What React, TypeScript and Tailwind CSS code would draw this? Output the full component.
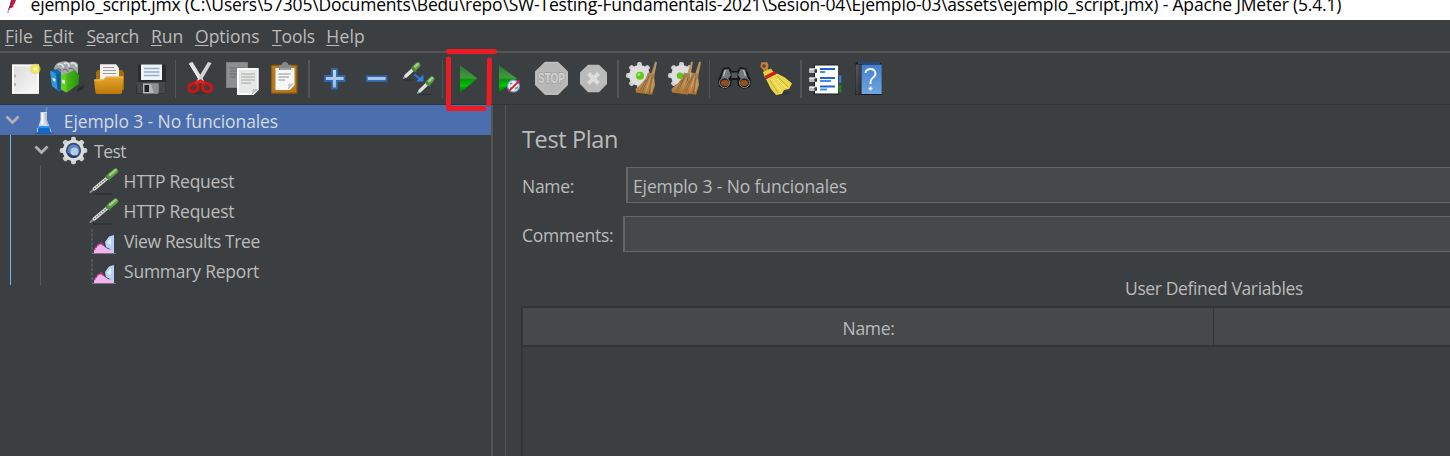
import type { ReactNode } from "react";

const TITLE =
  "ejemplo_script.jmx (C:\\Users\\57305\\Documents\\Bedu\\repo\\SW-Testing-Fundamentals-2021\\Sesion-04\\Ejemplo-03\\assets\\ejemplo_script.jmx) - Apache JMeter (5.4.1)";

const MENUS = [
  { label: "File", cls: "w-[38px]" },
  { label: "Edit", cls: "w-[43.5px]" },
  { label: "Search", cls: "w-[64.5px] tracking-[-0.55px]" },
  { label: "Run", cls: "w-[44px]" },
  { label: "Options", cls: "w-[77px]" },
  { label: "Tools", cls: "w-[54.3px] tracking-[-0.1px]" },
  { label: "Help", cls: "w-[50px] tracking-[0.2px]" },
];

/* One 42px toolbar cell; drawing coordinates start one pixel below the toolbar's top border. */
function Tool({ children }: { children: ReactNode }) {
  return (
    <svg width="42" height="51" viewBox="0 1 42 51" className="block shrink-0 overflow-visible">
      {children}
    </svg>
  );
}

function Separator({ cls }: { cls: string }) {
  return <div className={`h-[38px] shrink-0 bg-[#555555] ${cls}`} />;
}

function Defs() {
  return (
    <svg width="0" height="0" className="absolute">
      <defs>
        <linearGradient id="paper" x1="0" y1="0" x2="1" y2="1">
          <stop offset="0" stopColor="#dcdcdc" />
          <stop offset="1" stopColor="#f8f8f8" />
        </linearGradient>
        <linearGradient id="green" x1="0" y1="0" x2="0" y2="1">
          <stop offset="0" stopColor="#2c7a2c" />
          <stop offset=".46" stopColor="#3f9a3f" />
          <stop offset=".54" stopColor="#049604" />
          <stop offset=".75" stopColor="#00c400" />
          <stop offset="1" stopColor="#0a6c0a" />
        </linearGradient>
        <linearGradient id="amber" x1="0" y1="0" x2="0" y2="1">
          <stop offset="0" stopColor="#e5a62c" />
          <stop offset="1" stopColor="#bd7a0c" />
        </linearGradient>
        <linearGradient id="sky" x1="0" y1="0" x2="0" y2="1">
          <stop offset="0" stopColor="#c4daf0" />
          <stop offset="1" stopColor="#8fb8e2" />
        </linearGradient>
        <linearGradient id="lime" x1="0" y1="0" x2="1" y2="0">
          <stop offset="0" stopColor="#8ade2c" />
          <stop offset=".4" stopColor="#3fb516" />
          <stop offset="1" stopColor="#2d9410" />
        </linearGradient>
        <linearGradient id="straw" x1="0" y1="0" x2="0" y2="1">
          <stop offset="0" stopColor="#a07c50" />
          <stop offset=".6" stopColor="#b98a4e" />
          <stop offset="1" stopColor="#a8702f" />
        </linearGradient>
        <linearGradient id="cover" x1="0" y1="0" x2="0" y2="1">
          <stop offset="0" stopColor="#4480cc" />
          <stop offset="1" stopColor="#6ea4e2" />
        </linearGradient>
        <linearGradient id="metal" x1="0" y1="0" x2="1" y2="1">
          <stop offset="0" stopColor="#5a5c60" />
          <stop offset="1" stopColor="#26282b" />
        </linearGradient>
        <radialGradient id="glow">
          <stop offset="0" stopColor="#ffffd8" />
          <stop offset=".4" stopColor="#f5ea62" />
          <stop offset=".8" stopColor="#e6d840" stopOpacity=".7" />
          <stop offset="1" stopColor="#e6d840" stopOpacity="0" />
        </radialGradient>
      </defs>
    </svg>
  );
}

function Gear({ cx, cy, s, children }: { cx: number; cy: number; s: number; children?: ReactNode }) {
  return (
    <g transform={`translate(${cx} ${cy}) scale(${s})`}>
      <g fill="#cfd0d2">
        <rect x="-2.5" y="-14" width="5" height="28" rx="1.8" />
        <rect x="-14" y="-2.5" width="28" height="5" rx="1.8" />
        <rect x="-2.5" y="-14" width="5" height="28" rx="1.8" transform="rotate(45)" />
        <rect x="-2.5" y="-14" width="5" height="28" rx="1.8" transform="rotate(-45)" />
        <circle r="11" fill="#dededf" />
      </g>
      {children}
    </g>
  );
}

function Dropper({ x1, y1, x2, y2 }: { x1: number; y1: number; x2: number; y2: number }) {
  const at = (t: number) => [x1 + (x2 - x1) * t, y1 + (y2 - y1) * t];
  const [ax, ay] = at(0.14);
  const [bx, by] = at(0.62);
  const [cx, cy] = at(0.68);
  const [dx, dy] = at(0.93);
  return (
    <g strokeLinecap="round">
      <path d={`M${x1} ${y1}L${bx} ${by}`} stroke="#8b8e90" strokeWidth="2" />
      <path d={`M${ax} ${ay}L${bx} ${by}`} stroke="#dfe2df" strokeWidth="3.4" />
      <path d={`M${cx} ${cy}L${dx} ${dy}`} stroke="#5c9a48" strokeWidth="5.2" />
      <path d={`M${cx + 1} ${cy - 2}L${dx} ${dy - 1}`} stroke="#9dd07e" strokeWidth="2.4" />
      <path d={`M${bx - 1} ${by - 1.5}L${bx + 2.5} ${by + 2}`} stroke="#4a7f3e" strokeWidth="1.6" />
    </g>
  );
}

function Bristles({ dx = 0 }: { dx?: number }) {
  return (
    <g transform={`translate(${dx} 0)`}>
      <path d="M35.2 9.6 37 10.2 34 25 30.5 24Z" fill="#b9925e" />
      <path d="M28 20.5 34 22 35 33 32 42.8 16 40.5 15.500 37 22 31 26 26Z" fill="url(#straw)" />
      <path d="m29 24-7 16M32 25l-3 17M26 28l-6 11" stroke="#86602f" strokeWidth=".8" />
      <path d="m30.5 25-5 16M33.5 27l-2 13" stroke="#d2a76b" strokeWidth=".8" />
    </g>
  );
}

function GroupFile() {
  return (
    <>
      <Tool>
        <rect x="7" y="12.3" width="27" height="29.6" fill="#f8f8f8" />
        <rect x="9" y="14.5" width="23" height="25.5" fill="url(#paper)" />
        <path d="M10 22.5v3M10 31v3" stroke="#888" strokeWidth="1" />
        <circle cx="30.3" cy="17" r="5.800" fill="url(#glow)" />
      </Tool>
      <Tool>
        <path d="M31 36 37 33 36 37 30 40Z" fill="#2a2d2e" />
        <path d="M7 16Q9 10 14 10 18 8.500 22 10.500 27 8 31 12V22H9Z" fill="#a5a9ac" />
        <path d="M11 13a3 3 0 0 1 5 3M17 12a3 3 0 0 1 5 3M24 12a3 3 0 0 1 5 3" stroke="#e2e4e5" strokeWidth="1.400" fill="none" />
        <path d="M10 17a3 3 0 0 1 4 2M16 18a3 3 0 0 1 5 2M22 17a3 3 0 0 1 5 2" stroke="#6d7275" strokeWidth="1.200" fill="none" />
        <path d="M3 19 10 17 14 20V38L12 40 5 34Z" fill="#1667a8" />
        <path d="M3 19 8.500 21 10.500 38 5 34Z" fill="#3197d8" />
        <path d="M5.500 25.500 8.500 27v3l-2.700-1.500Z" fill="#d8ecfa" />
        <path d="M11.500 22V37" stroke="#0f4f86" strokeWidth="1.500" />
        <path d="M14 22 20 21.500 28 18 32 23 31.500 32 20 40.500 14 37Z" fill="url(#lime)" />
        <path d="M14 22 19 23.500V40.500L14 37.500Z" fill="#6ccb1c" />
        <path d="M15.200 27.500 18 28.500V32L15.200 31Z" fill="#e9fbd2" />
      </Tool>
      <Tool>
        <path d="M7 20 9 18H33L35 21V38H7Z" fill="#a96c08" />
        <path d="M11 12.300H27L30 16V28H11Z" fill="#f3f3f3" />
        <path d="M14 15.500H25M14 18.500H27M14 21.500H27" stroke="#9a9a9a" strokeWidth="1.200" />
        <path d="M5 27.500H14L17 24.500H34.500L33 40.500Q32.800 42 31 42H8Q6.600 42 6.400 40Z" fill="url(#amber)" />
        <path d="M5.500 28H14.300L17.300 25H34" stroke="#f3c665" strokeWidth="1" fill="none" />
      </Tool>
      <Tool>
        <path d="M7 12.500H34L35 14V41.500H5V35L7 30Z" fill="#2a2b2d" />
        <path d="M6 30H34.500V41H6Z" fill="#45474a" />
        <path d="M10 12.500H31V28H10Z" fill="#eef3f8" />
        <path d="M13 16.500H28.500M13 20H28.500M13 23.500H28.500" stroke="#8eaed2" strokeWidth="1.400" />
        <path d="M12 31.500H27.500V41.500H12Z" fill="#b4b6b8" />
        <path d="M13.500 33H18V40H13.500Z" fill="#222" />
        <path d="M20 32 23 41.500H27V32Z" fill="#8d9092" />
      </Tool>
    </>
  );
}

function GroupClipboard() {
  return (
    <>
      <Tool>
        <ellipse cx="21" cy="41" rx="8" ry="1.500" fill="#323536" />
        <path d="M10 11 13.500 10 25 29 21.500 31Z" fill="#e0e1e1" />
        <path d="M32.500 11 29 10 17.500 29 21 31Z" fill="#d2d4d4" />
        <path d="M10.500 12 22 30" stroke="#fff" strokeWidth="1" />
        <circle cx="21.300" cy="28" r="1" fill="#777" />
        <ellipse cx="14.500" cy="35.500" rx="4.800" ry="4" transform="rotate(-25 14.500 35.500)" fill="none" stroke="#d01414" strokeWidth="3.200" />
        <ellipse cx="28" cy="35.500" rx="4.800" ry="4" transform="rotate(25 28 35.500)" fill="none" stroke="#d01414" strokeWidth="3.200" />
        <path d="M16 31 21.300 29 26.500 31" stroke="#e02020" strokeWidth="3" fill="none" />
      </Tool>
      <Tool>
        <rect x="5" y="10" width="22" height="26" fill="#7e8182" />
        <rect x="6" y="11" width="20" height="24" fill="#8c8f90" />
        <path d="M9 16H23M9 19H20M9 22H16M9 25H15" stroke="#6b6e70" strokeWidth="1.200" />
        <path d="M16 16H37.700V38L32.500 43H16Z" fill="#fbfbfb" />
        <path d="M18 18H36V37L31 41H18Z" fill="#e6e7e7" />
        <path d="M20 22H34M20 25H34M20 28H34M20 31H30" stroke="#a5a7a8" strokeWidth="1.200" />
        <path d="M37.700 37 32 37 30.500 43Z" fill="#bfc1c2" />
      </Tool>
      <Tool>
        <rect x="8" y="12.700" width="26.500" height="29" rx="1" fill="#8f5c10" />
        <rect x="9.200" y="14" width="24" height="26.500" fill="#b97a1d" />
        <path d="M12.500 16H31.500V33L27 38H12.500Z" fill="#f6f6f6" />
        <path d="M15.500 22H27.500M15.500 25H26M15.500 28H22" stroke="#8f9294" strokeWidth="1.200" />
        <path d="M31.500 31 25.500 32 25 38Z" fill="#c4c6c7" />
        <path d="M16 18V14Q16 13 17.500 13H18.500Q19 10 22 10T25.500 13H27Q28.200 13 28.200 14V18Z" fill="#85898a" />
        <path d="M17 17H27.300" stroke="#b6b9ba" strokeWidth="1" />
      </Tool>
    </>
  );
}

function GroupTree() {
  return (
    <>
      <Tool>
        <path d="M18 17H23V24H30.500V29H23V36.500H18V29H11V24H18Z" fill="url(#sky)" stroke="#3166ac" strokeWidth="1.800" />
      </Tool>
      <Tool>
        <rect x="10.800" y="24.200" width="19.700" height="4.800" fill="url(#sky)" stroke="#3166ac" strokeWidth="1.800" />
      </Tool>
      <Tool>
        <path d="M6 28H16M21 42.500H34" stroke="#2c2f30" strokeWidth="1.200" />
        <Dropper x1={5.800} y1={26} x2={21} y2={12} />
        <Dropper x1={19.800} y1={41} x2={35} y2={26} />
        <path d="M16.500 22.500 22 27" stroke="#2c7be8" strokeWidth="2" />
        <path d="M25.500 22.500V29.500H18Z" fill="#2f7ff0" />
      </Tool>
    </>
  );
}

function GroupRun() {
  return (
    <>
      <Tool>
        <path d="M14 13.300 31.400 26.600 14 40.400Z" fill="url(#green)" />
      </Tool>
      <Tool>
        <path d="M11 13.300 29 26.600 11 40.400Z" fill="url(#green)" />
        <circle cx="25.500" cy="34" r="6" fill="#e4ecf4" stroke="#6d9bd0" strokeWidth="1.200" />
        <path d="M22 32 24 31M27 37 30 35M22 36H24" stroke="#8d9194" strokeWidth="1.600" />
        <path d="M20.500 39.500 31.500 28.500" stroke="#d3262c" strokeWidth="1.800" />
      </Tool>
      <Tool>
        <path d="M15 9.700H28L38 19.500V33L28 43H15L5 33V19.500Z" fill="#b7b7b7" />
        <path d="M15.500 11H27.500L36.700 20V32.500L27.500 41.700H15.500L6.300 32.500V20Z" fill="none" stroke="#c0c0c0" strokeWidth="1" />
        <text x="21.500" y="31.300" textAnchor="middle" textLength="27" lengthAdjust="spacingAndGlyphs" fontSize="14" fontWeight="700" fontFamily="Liberation Sans, sans-serif" fill="#d2d2d2" stroke="#9e9e9e" strokeWidth="1.400" paintOrder="stroke">
          STOP
        </text>
      </Tool>
      <Tool>
        <path d="M16 12.700H27L35 20.500V32L27 40.300H16L8 32V20.500Z" fill="#bababa" />
        <path d="M16.500 21.500 26.500 31.500M26.500 21.500 16.500 31.500" stroke="#dcdcdc" strokeWidth="4" />
      </Tool>
    </>
  );
}

function GroupClear() {
  return (
    <>
      <Tool>
        <Gear cx={19.500} cy={23.500} s={0.96} />
        <circle cx="20" cy="23.700" r="4" fill="#62c41c" />
        <circle cx="19" cy="22.500" r="1.500" fill="#a6ea62" />
        <Bristles />
      </Tool>
      <Tool>
        <Gear cx={19.500} cy={23.500} s={0.96} />
        <circle cx="18" cy="23.700" r="3.200" fill="#62c41c" />
        <Bristles dx={-6} />
        <Bristles dx={2} />
      </Tool>
    </>
  );
}

function GroupSearch() {
  return (
    <>
      <Tool>
        <path d="M10 16 16 15 19 19H24L27 15 33 16 38 28 37 35 31 37 25 34 24 28H19L18 34 12 37 6 35 5 28Z" fill="#17181a" />
        <path d="M11 17.500 15.500 17 18 23 15 27 8 27ZM32 17.500 27.500 17 25 23 28 27 35 27Z" fill="#73767a" />
        <path d="M18.500 20.500H24.500V26H18.500Z" fill="#55585c" />
        <path d="M12.500 18 10.500 24M30.500 18 32.500 24" stroke="#c0c2c4" strokeWidth="1.200" />
        <circle cx="11.500" cy="30.700" r="5" fill="#2b2522" stroke="#85888b" strokeWidth="1" />
        <circle cx="31.500" cy="30.700" r="5" fill="#2b2522" stroke="#85888b" strokeWidth="1" />
        <ellipse cx="12" cy="31" rx="4" ry="3" fill="#96501f" />
        <ellipse cx="31" cy="31" rx="4" ry="3" fill="#96501f" />
      </Tool>
      <Tool>
        <ellipse cx="26" cy="41.500" rx="9" ry="1.500" fill="#303334" />
        <path d="M6 10.500 12 10 13.500 13 13 17 15 20 9 22 8.500 18 5.500 15Z" fill="#c08044" />
        <circle cx="9" cy="14" r="1.800" fill="#6b4020" />
        <path d="M8 20 16 16.500 19 21 10 26Z" fill="#e5cf3a" />
        <path d="M11 27 22 21.500 30 25.500 37 31.500 34 37 29 38 27 42 21 43 16 37Z" fill="#ead64a" />
        <path d="M15 28 23 41M22 24 33 35" stroke="#c4a92a" strokeWidth=".9" />
        <path d="M17 27 26 39M22 27 31 36" stroke="#f8ec86" strokeWidth="1" />
        <path d="M10.500 25.500 20.500 20.500" stroke="#d01c1c" strokeWidth="3.400" />
      </Tool>
    </>
  );
}

function GroupHelp() {
  return (
    <>
      <Tool>
        <rect x="31" y="23.500" width="5.300" height="7.500" fill="#2f80e0" />
        <rect x="31" y="33" width="5.300" height="7.500" fill="#0f8f1c" />
        <rect x="9" y="12.700" width="25" height="29.800" fill="#17181a" />
        <rect x="10" y="13.500" width="23.200" height="28" fill="#fff" />
        <path d="M15 17H30M15 26H30M15 34.500H30" stroke="#1d63d8" strokeWidth="2" />
        <path d="M15 20H20M15 29H26M15 37.500H22" stroke="#4a8cf0" strokeWidth="1.800" />
        {[18.500, 27.500, 36.500].map((y) => (
          <g key={y}>
            <rect x="4" y={y - 2.200} width="7.500" height="4.600" rx="1" fill="#b9bcbe" />
            <path d={`M4.500 ${y - 1.200}H11`} stroke="#f5f5f5" strokeWidth="1.200" />
            <rect x="9.500" y={y - 1.200} width="2.500" height="3.400" fill="#333" />
          </g>
        ))}
      </Tool>
      <Tool>
        <path d="M8 12 10 10H32.500L34.700 12V43H8Z" fill="#16181b" />
        <path d="M14.500 12.500H34.700V42H14.500Z" fill="url(#cover)" />
        <path d="M8.500 12.500H14V42.500H8.500Z" fill="url(#metal)" />
        <path d="M11 11H33" stroke="#31598e" strokeWidth="1.600" />
        <path d="M18.500 21Q19 17 23.500 17T28.500 21.500Q28.500 24 26 25.800T23.500 30V32" fill="none" stroke="#f0f5fb" strokeWidth="2" />
        <path d="M21.500 36.500H25.500M23.500 34.500V38.500" stroke="#f0f5fb" strokeWidth="1.600" />
      </Tool>
    </>
  );
}

function Chevron({ cls }: { cls: string }) {
  return (
    <svg width="15" height="10" viewBox="0 0 15 10" className={`shrink-0 ${cls}`}>
      <path d="M1.500 1.500 7.500 7.500 13.500 1.500" fill="none" stroke="#afb1b3" strokeWidth="2.800" />
    </svg>
  );
}

function Flask() {
  return (
    <svg width="22" height="30" viewBox="0 0 22 30" className="shrink-0">
      <ellipse cx="11" cy="28.300" rx="10" ry="1" fill="#39588f" />
      <path d="M13 7 13.500 3 14.500 2" stroke="#8fa0b8" strokeWidth="1" fill="none" />
      <path d="M7.500 7H14V15L18.500 28H3.500L7.500 15Z" fill="#d3dce8" />
      <path d="M6 21H16L18.500 28H3.500Z" fill="#0f6ad0" />
      <path d="M6 21H16L16.500 23H5.500Z" fill="#2b90f2" />
      <path d="M9.300 8V19" stroke="#fff" strokeWidth="1.800" />
      <path d="M13 8V15L15 20" stroke="#9aa9bd" strokeWidth="1" fill="none" />
      <path d="M4.500 23V27M17 23.500 18 27" stroke="#b9cbe2" strokeWidth="1" />
    </svg>
  );
}

function ChartIcon() {
  return (
    <svg width="28" height="30" viewBox="0 0 28 30" className="shrink-0">
      <path d="M1 4V28" stroke="#626567" strokeWidth="1.200" strokeDasharray="3 1.500" />
      <path d="M1 28.500H25" stroke="#77797b" strokeWidth="1" />
      <path d="M3 28V25L6 21 8 19 11 19.500 14 22 17 24 23 25V28Z" fill="#f3b3ee" />
      <path d="M3 25 6 21 8 19 11 18 12.500 20.500" stroke="#b8327e" strokeWidth="1.600" strokeDasharray="2 1" fill="none" />
      <path d="M14 17 18 11.500 23 10V27L19 24 15 22Z" fill="#b4d2f6" />
      <path d="M16 18 20 12.500V20Z" fill="#ddeeff" />
    </svg>
  );
}

function RequestIcon() {
  return (
    <svg width="30" height="30" viewBox="0 0 30 30" className="shrink-0">
      <path d="M4 29H23" stroke="#2b2e2f" strokeWidth="1.200" />
      <Dropper x1={1.500} y1={27} x2={28.500} y2={4.500} />
      <path d="M5 24 18 13.200" stroke="#6f7371" strokeWidth="1.400" strokeDasharray="1.500 1.200" />
    </svg>
  );
}

function TestPlanTree() {
  return (
    <div className="w-[491px] shrink-0">
      <div className="flex h-[30px] items-center bg-[#4b6eaf]">
        <Chevron cls="ml-[5px]" />
        <div className="ml-[13px]"><Flask /></div>
        <span className="ml-[8.800px] pt-[2px] tracking-[-0.11px] text-[#d6dae0]">Ejemplo 3 - No funcionales</span>
      </div>
      <div className="ml-[10px] h-[150px] border-l border-[#6fb6f5]">
        <div className="flex h-[30px] items-center">
          <Chevron cls="ml-[23px]" />
          <svg width="30" height="30" viewBox="0 0 30 30" className="ml-[10px] shrink-0">
            <Gear cx={14.500} cy={15.500} s={0.98}>
              <circle r="7.800" fill="#33507f" />
              <circle r="6" fill="#5d83bd" />
              <circle cx="1" cy="1" r="4" fill="#b7cbe4" />
              <path d="M-5 3A6 6 0 0 0 3 5.500" stroke="#1d3562" strokeWidth="1.500" fill="none" />
            </Gear>
          </svg>
          <span className="ml-[5px] pt-[2px] tracking-[-0.5px]">Test</span>
        </div>
        <div className="ml-[29px] h-[120px] border-l border-[#57595b]">
          {[0, 1].map((i) => (
            <div key={i} className="flex h-[30px] items-center pl-[47.500px]">
              <RequestIcon />
              <span className="ml-[5px] pt-[2px] tracking-[-0.25px]">HTTP Request</span>
            </div>
          ))}
          <div className="flex h-[30px] items-center pl-[50px]">
            <ChartIcon />
            <span className="ml-[5px] pt-[2px] tracking-[-0.38px]">View Results Tree</span>
          </div>
          <div className="flex h-[30px] items-center pl-[50px]">
            <ChartIcon />
            <span className="ml-[5px] pt-[2px] tracking-[-0.22px]">Summary Report</span>
          </div>
        </div>
      </div>
    </div>
  );
}

function TestPlanPanel() {
  return (
    <div className="flex min-w-0 flex-1 flex-col border-l border-[#555555] pl-[15px]">
      <h1 className="h-[62px] pt-[19px] pl-[1px] text-[23.500px] leading-[30px] tracking-[-0.36px]">Test Plan</h1>
      <div className="flex h-[36px]">
        <span className="w-[105px] shrink-0 pt-[4px] pl-[1px] leading-[30px] tracking-[-0.3px]">Name:</span>
        <div className="flex-1 border-y border-l-2 border-[#646667] bg-[#45494a] pt-[3px] pl-[5px] leading-[30px] tracking-[-0.12px]">
          Ejemplo 3 - No funcionales
        </div>
      </div>
      <div className="mt-[13px] flex h-[36px]">
        <span className="w-[102px] shrink-0 pt-[4px] pl-[1px] leading-[30px] tracking-[-0.25px]">Comments:</span>
        <div className="flex-1 border-y border-l-2 border-[#646667] bg-[#45494a]" />
      </div>
      <div className="mt-[21px] flex h-[33px] pl-[604px] leading-[30px] tracking-[-0.37px]">
        <span className="whitespace-nowrap">User Defined Variables</span>
      </div>
      <div className="flex-1 border-t-2 border-l-2 border-[#323536]">
        <div className="flex h-[39px] border-b-2 border-[#323536] bg-[#45494b]">
          <div className="w-[691px] border-r border-[#323536] pt-[5px] pl-[1px] text-center leading-[30px] tracking-[-0.35px]">Name:</div>
        </div>
      </div>
    </div>
  );
}

export default function App() {
  return (
    <div className="relative flex h-[456px] w-[1450px] flex-col overflow-hidden bg-[#3c3f41] font-['Open_Sans',sans-serif] text-[17.500px] text-[#bbbbbb]">
      <Defs />
      <div className="flex h-[20px] shrink-0 bg-white text-black">
        <svg width="24" height="20" viewBox="0 0 24 20" className="shrink-0">
          <path d="M11 0H16L14.500 4 13 5.500 14 6 11 8.500 9.500 7.500Z" fill="#c4203a" />
          <path d="M12 0 10 6 7.800 12.500" stroke="#6a2a6c" strokeWidth="1.200" strokeDasharray="5 1" fill="none" />
        </svg>
        <span className="-mt-[11px] ml-[6.500px] h-[30px] leading-[30px] tracking-[-0.178px] whitespace-nowrap">{TITLE}</span>
      </div>
      <div className="flex h-[31px] shrink-0 pt-[1px] pl-[5px] leading-[31px]">
        {MENUS.map(({ label, cls }) => (
          <span key={label} className={cls}>
            <span className="underline decoration-1 underline-offset-[2px]">{label[0]}</span>
            {label.slice(1)}
          </span>
        ))}
      </div>
      <div className="flex h-[54px] shrink-0 items-center border-t-2 border-b border-t-[#555555] border-b-[#323536] pl-[5px]">
        <GroupFile />
        <Separator cls="ml-[2px] mr-[3px] w-[1px]" />
        <GroupClipboard />
        <Separator cls="ml-[3px] mr-[4px] w-[2px]" />
        <GroupTree />
        <Separator cls="ml-[2px] mr-[3px] w-[1px]" />
        <GroupRun />
        <Separator cls="ml-[3px] mr-[1px] w-[2px]" />
        <GroupClear />
        <Separator cls="ml-[5px] mr-[3px] w-[1px]" />
        <GroupSearch />
        <Separator cls="ml-[3px] mr-[3px] w-[2px]" />
        <GroupHelp />
      </div>
      <div className="flex min-h-0 flex-1">
        <TestPlanTree />
        <div className="mr-[12px] w-[2px] shrink-0 bg-[#555555]" />
        <TestPlanPanel />
      </div>
      <svg width="60" height="70" viewBox="0 0 60 70" className="absolute top-[46px] left-[442px]">
        <path d="M6.500 5.500H52.500M6.500 13V62.500M6.500 62.500H42M47.500 14 47 58" fill="none" stroke="#ed1c24" strokeWidth="5" strokeLinecap="round" strokeLinejoin="round" />
      </svg>
    </div>
  );
}
